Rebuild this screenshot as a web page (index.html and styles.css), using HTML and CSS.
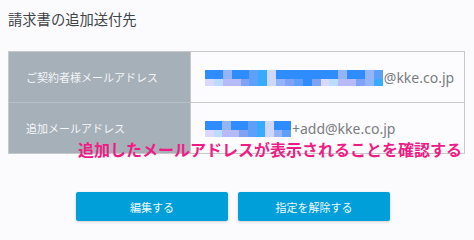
FILE: index.html
```html
<!DOCTYPE html>
<html lang="ja">
<head>
<meta charset="utf-8">
<link rel="stylesheet" href="styles.css">
</head>
<body>
<div class="page">
  <h1 class="title">請求書の追加送付先</h1>
  <div class="info">
    <div class="row">
      <div class="label">ご契約者様メールアドレス</div>
      <div class="value">
        <span class="mosaic m20">
          <i class="a"></i><i class="a"></i><i class="b"></i><i class="a"></i><i class="a"></i><i class="c"></i><i class="d"></i><i class="e"></i><i class="a"></i><i class="a"></i>
          <i class="a"></i><i class="a"></i><i class="a"></i><i class="a"></i><i class="a"></i><i class="b"></i><i class="a"></i><i class="a"></i><i class="b"></i><i class="c"></i>
          <i class="f"></i><i class="g"></i><i class="h"></i><i class="h"></i><i class="i"></i><i class="c"></i><i class="d"></i><i class="e"></i><i class="b"></i><i class="i"></i>
          <i class="c"></i><i class="a"></i><i class="i"></i><i class="f"></i><i class="g"></i><i class="h"></i><i class="h"></i><i class="i"></i><i class="b"></i><i class="d"></i>
        </span><span class="addr">@kke.co.jp</span>
      </div>
    </div>
    <div class="row">
      <div class="label">追加メールアドレス</div>
      <div class="value">
        <span class="mosaic m10">
          <i class="a"></i><i class="a"></i><i class="b"></i><i class="a"></i><i class="a"></i><i class="c"></i><i class="d"></i><i class="e"></i><i class="a"></i><i class="a"></i>
          <i class="f"></i><i class="g"></i><i class="h"></i><i class="h"></i><i class="i"></i><i class="c"></i><i class="d"></i><i class="e"></i><i class="b"></i><i class="c"></i>
        </span><span class="addr">+add@kke.co.jp</span>
      </div>
    </div>
  </div>
  <div class="actions">
    <button class="btn">編集する</button>
    <button class="btn">指定を解除する</button>
  </div>
  <div class="note">追加したメールアドレスが表示されることを確認する</div>
</div>
</body>
</html>
```
FILE: styles.css
```css
html, body {
  margin: 0;
  padding: 0;
  background: #fbfbfd;
}
body {
  font-family: "Noto Sans", "Noto Sans CJK JP", sans-serif;
  width: 474px;
  height: 232px;
  overflow: hidden;
}
.page {
  position: relative;
  padding: 10px 9px 0 8px;
}
.title {
  margin: 0;
  font-size: 14.3px;
  line-height: 20px;
  font-weight: normal;
  color: #3f4448;
}
.info {
  margin-top: 21px;
  border: 1px solid #c6c8ca;
  width: 455px;
}
.row {
  display: grid;
  grid-template-columns: 182px 1fr;
  height: 50px;
}
.row + .row {
  border-top: 1px solid #c6c8ca;
}
.row + .row .label {
  border-top: 1px solid #b8c0c7;
  margin-top: -1px;
}
.label {
  background: #a6b0b9;
  color: #f3f5f7;
  font-size: 11px;
  display: flex;
  align-items: center;
  padding-left: 17px;
  border-right: 1px solid #c6c8ca;
}
.value {
  display: flex;
  align-items: center;
  padding-left: 14px;
  background: #fcfcfe;
}
.mosaic {
  display: grid;
  grid-template-rows: 9px 7px;
  margin-top: 1px;
}
.m20 {
  grid-template-columns: repeat(20, 8.9px);
}
.m10 {
  grid-template-columns: repeat(10, 8.6px);
}
.mosaic i { display: block; }
.mosaic .a { background: #2f8cff; }
.mosaic .b { background: #93b4f6; }
.mosaic .c { background: #5e9ffc; }
.mosaic .d { background: #36abff; }
.mosaic .e { background: #cfd8fa; }
.mosaic .f { background: #dad8fb; }
.mosaic .g { background: #bcdcff; }
.mosaic .h { background: #b6baf6; }
.mosaic .i { background: #7fa2f5; }
.addr {
  font-size: 14px;
  color: #7b7d81;
  margin-left: 1px;
}
.actions {
  display: flex;
  gap: 10px;
  margin-top: 38px;
  padding-left: 68px;
}
.btn {
  width: 152px;
  height: 29px;
  border: none;
  border-radius: 2px;
  background: #009fd9;
  color: #eef8fd;
  font-family: "Noto Sans", "Noto Sans CJK JP", sans-serif;
  font-size: 11px;
  box-shadow: 0 1px 3px rgba(0, 0, 0, 0.18);
  padding: 0;
}
.note {
  position: absolute;
  left: 78px;
  top: 140px;
  font-size: 16px;
  line-height: 20px;
  font-weight: bold;
  color: #f01c85;
  white-space: nowrap;
}
```
